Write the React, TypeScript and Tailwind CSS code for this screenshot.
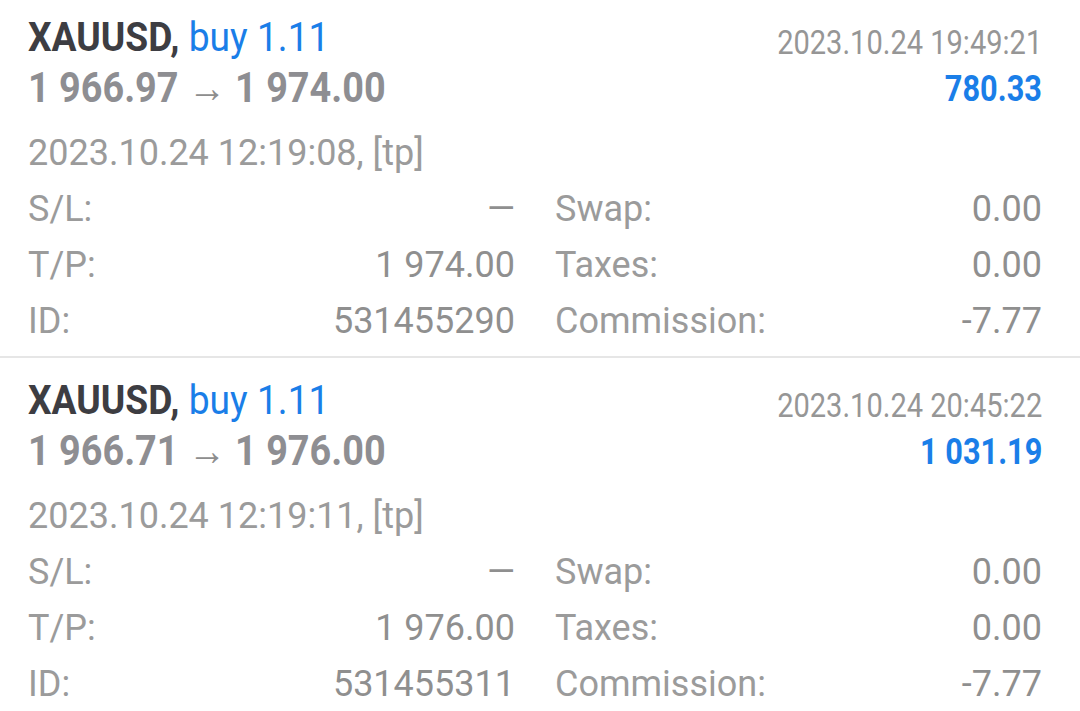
import React from "react";

type Trade = {
  symbol: string;
  side: string;
  volume: string;
  openPrice: string;
  closePrice: string;
  openTime: string;
  closeTime: string;
  profit: string;
  sl: string;
  tp: string;
  id: string;
  swap: string;
  taxes: string;
  commission: string;
};

const trades: Trade[] = [
  {
    symbol: "XAUUSD",
    side: "buy",
    volume: "1.11",
    openPrice: "1 966.97",
    closePrice: "1 974.00",
    openTime: "2023.10.24 12:19:08",
    closeTime: "2023.10.24 19:49:21",
    profit: "780.33",
    sl: "—",
    tp: "1 974.00",
    id: "531455290",
    swap: "0.00",
    taxes: "0.00",
    commission: "-7.77",
  },
  {
    symbol: "XAUUSD",
    side: "buy",
    volume: "1.11",
    openPrice: "1 966.71",
    closePrice: "1 976.00",
    openTime: "2023.10.24 12:19:11",
    closeTime: "2023.10.24 20:45:22",
    profit: "1 031.19",
    sl: "—",
    tp: "1 976.00",
    id: "531455311",
    swap: "0.00",
    taxes: "0.00",
    commission: "-7.77",
  },
];

const DetailRow = ({ label, value }: { label: string; value: string }) => (
  <div className="flex justify-between h-[56px] leading-[56px]">
    <span className="text-[#9b9b9b]">{label}</span>
    <span className="text-[#8f8f8f]">{value}</span>
  </div>
);

const TradeCard = ({ trade, first }: { trade: Trade; first?: boolean }) => {
  return (
    <div
      className={`pl-[28px] pr-[38px] pb-[7px] border-b-2 border-[#e6e6e6] ${
        first ? "pt-[13px]" : "pt-[18px]"
      }`}
    >
      {/* Header */}
      <div className="flex justify-between">
        <div>
          <div className="h-[50px] leading-[50px] text-[40px] whitespace-nowrap">
            <span className="inline-block origin-left scale-x-[0.93]">
              <span className="font-bold text-[#3d3d42]">{trade.symbol},</span>{" "}
              <span className="text-[#1a7ee8]">
                {trade.side} {trade.volume}
              </span>
            </span>
          </div>
          <div className="h-[50px] leading-[50px] text-[42px] whitespace-nowrap">
            <span className="inline-block origin-left scale-x-[0.9] font-bold text-[#8e8e92]">
              {trade.openPrice} <span className="font-normal text-[#8e8e8e]">→</span>{" "}
              {trade.closePrice}
            </span>
          </div>
        </div>
        <div className="flex flex-col items-end pt-[5px] whitespace-nowrap">
          <div className="h-[50px] leading-[50px] text-[33px] text-[#969696]">
            <span className="inline-block origin-right scale-x-[0.88]">
              {trade.closeTime}
            </span>
          </div>
          <div className="h-[42px] leading-[42px] text-[37px] font-bold text-[#1a7ee8]">
            <span className="inline-block origin-right scale-x-[0.83]">
              {trade.profit}
            </span>
          </div>
        </div>
      </div>

      {/* Open time */}
      <div className="mt-[16px] h-[48px] leading-[48px] text-[#9b9b9b] whitespace-nowrap">
        {trade.openTime}, [tp]
      </div>

      {/* Details */}
      <div className="mt-[4px] grid grid-cols-2 gap-x-[40px]">
        <div>
          <DetailRow label="S/L:" value={trade.sl} />
          <DetailRow label="T/P:" value={trade.tp} />
          <DetailRow label="ID:" value={trade.id} />
        </div>
        <div>
          <DetailRow label="Swap:" value={trade.swap} />
          <DetailRow label="Taxes:" value={trade.taxes} />
          <DetailRow label="Commission:" value={trade.commission} />
        </div>
      </div>
    </div>
  );
};

export default function App() {
  return (
    <div className="h-[711px] w-[1080px] overflow-hidden bg-white font-[Roboto,sans-serif] text-[36px]">
      {trades.map((t, i) => (
        <TradeCard key={t.id} trade={t} first={i === 0} />
      ))}
    </div>
  );
}
